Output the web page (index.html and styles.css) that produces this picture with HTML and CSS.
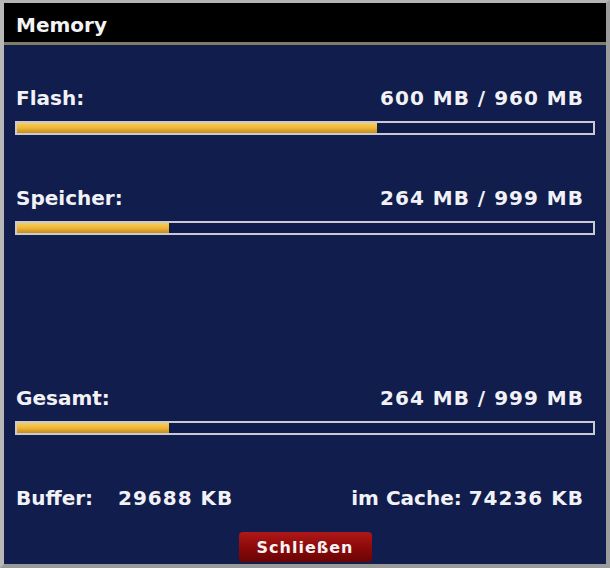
FILE: index.html
```html
<!DOCTYPE html>
<html>
<head>
    <title>Memory</title>
    <link rel="stylesheet" href="styles.css">
</head>
<body>
    <div class="window">
        <div class="titlebar">Memory</div>
        <div class="panel">
            <div class="row">
                <div class="label-line"><span>Flash:</span><span class="value">600 MB / 960 MB</span></div>
                <div class="bar"><div class="fill" style="width: 62.5%"></div></div>
            </div>
            <div class="row">
                <div class="label-line"><span>Speicher:</span><span class="value">264 MB / 999 MB</span></div>
                <div class="bar"><div class="fill" style="width: 26.4%"></div></div>
            </div>
            <div class="row empty"></div>
            <div class="row">
                <div class="label-line"><span>Gesamt:</span><span class="value">264 MB / 999 MB</span></div>
                <div class="bar"><div class="fill" style="width: 26.4%"></div></div>
            </div>
            <div class="info-line">
                <span><span class="buffer-label">Buffer:</span><span class="value">29688 KB</span></span>
                <span>im Cache: <span class="value">74236 KB</span></span>
            </div>
            <div class="actions">
                <button class="close-btn">Schließen</button>
            </div>
        </div>
    </div>
</body>
</html>
```

FILE: styles.css
```css
body{
    margin: 0;
    padding: 0;
    background-color: #a9a9a9;
    font-family: "DejaVu Sans", sans-serif;
    color: #f2f2f6;
}
.window{
    width: 602px;
    height: 561px;
    border-style: solid;
    border-color: #b4b4b4 #9c9c9c #9a9a9a #b8b8b8;
    border-width: 3px 4px 4px 4px;
    display: flex;
    flex-direction: column;
}
.titlebar{
    height: 29px;
    padding: 10px 0 0 12px;
    background-color: #000;
    border-bottom: 3px solid #7d7d68;
    font-size: 20px;
    font-weight: bold;
    line-height: 24px;
    color: #f4f4f4;
}
.panel{
    flex: 1;
    background-color: #101d4d;
    padding: 41px 11px 0 11px;
}
.row{
    height: 100px;
}
.label-line, .info-line{
    display: flex;
    justify-content: space-between;
    padding: 0 11px 0 1px;
    font-size: 20px;
    font-weight: bold;
    line-height: 24px;
}
.value{
    letter-spacing: 1px;
}
.bar{
    margin-top: 11px;
    height: 10px;
    border: 2px solid #c9cad4;
    background-color: #0f1c4b;
}
.fill{
    height: 100%;
    background: linear-gradient(#f6cf5a, #f0b93a 45%, #c78c1c);
}
.buffer-label{
    display: inline-block;
    width: 102px;
}
.actions{
    display: flex;
    justify-content: center;
    margin-top: 22px;
}
.close-btn{
    width: 133px;
    height: 30px;
    border: none;
    border-radius: 4px;
    background: linear-gradient(#b01818, #8c0a0a 50%, #6a0404);
    color: #f4f4f4;
    font-family: "DejaVu Sans", sans-serif;
    font-size: 16px;
    font-weight: bold;
    letter-spacing: 1px;
}
```
